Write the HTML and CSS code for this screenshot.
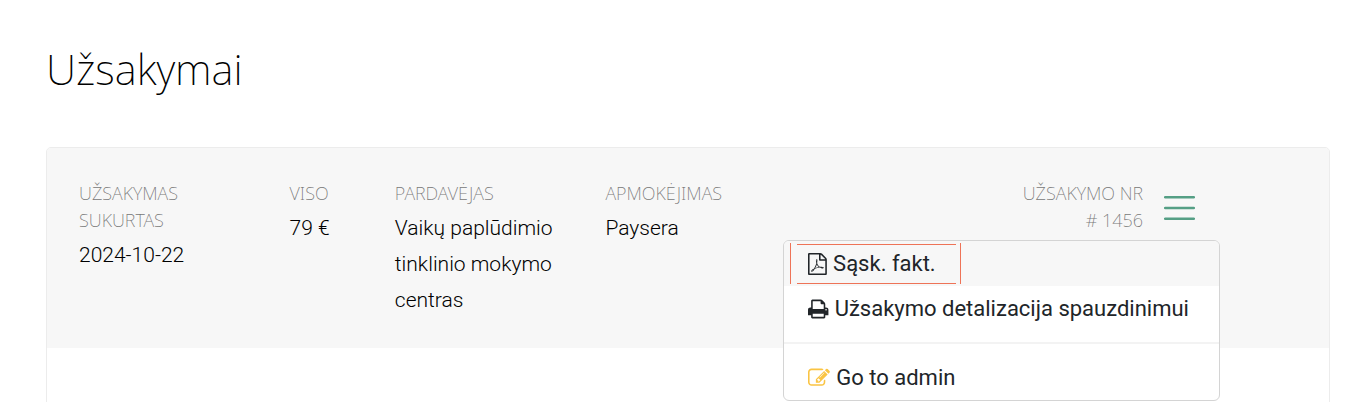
FILE: index.html
```html
<!DOCTYPE html>
<html lang="lt">
<head>
    <meta charset="UTF-8">
    <meta name="viewport" content="width=device-width, initial-scale=1.0">
    <title>Užsakymai</title>
    <link rel="stylesheet" href="styles.css">
</head>
<body>

<main class="page">
    <h1>Užsakymai</h1>

    <section class="order">
        <div class="order-header">
            <div class="order-col">
                <div class="label">Užsakymas sukurtas</div>
                <div class="value">2024-10-22</div>
            </div>
            <div class="order-col">
                <div class="label">Viso</div>
                <div class="value">79 €</div>
            </div>
            <div class="order-col">
                <div class="label">Pardavėjas</div>
                <div class="value">Vaikų paplūdimio tinklinio mokymo centras</div>
            </div>
            <div class="order-col">
                <div class="label">Apmokėjimas</div>
                <div class="value">Paysera</div>
            </div>
            <div class="order-actions">
                <div class="label">Užsakymo nr<br># 1456</div>
                <button class="menu-button" type="button" aria-label="Meniu" aria-expanded="true">
                    <svg width="31" height="26" viewBox="0 0 31 26" aria-hidden="true">
                        <path d="M1.2 2.2h28.6M1.2 13h28.6M1.2 23.8h28.6" fill="none" stroke="#559f85" stroke-width="2.5" stroke-linecap="round"/>
                    </svg>
                </button>

                <div class="dropdown">
                    <a class="dropdown-item active" href="#">
                        <svg class="icon" viewBox="128 0 1536 1792" aria-hidden="true"><path d="M1596 380q28 28 48 76t20 88v1152q0 40-28 68t-68 28h-1344q-40 0-68-28t-28-68v-1600q0-40 28-68t68-28h896q40 0 88 20t76 48zm-444-244v376h376q-10-29-22-41l-313-313q-12-12-41-22zm384 1528v-1024h-416q-40 0-68-28t-28-68v-416h-768v1536h1280zm-514-593q33 26 84 56 59-7 117-7 147 0 177 49 16 22 2 52 0 1-1 2l-2 2v1q-6 38-71 38-48 0-115-20t-130-53q-221 24-392 83-153 262-242 262-15 0-28-7l-24-12q-1-1-6-5-10-10-6-36 9-40 56-91.5t132-96.5q14-9 23 6 2 2 2 4 52-85 107-197 68-136 104-262-24-82-30.5-159.5t6.5-127.5q11-40 42-40h22q23 0 35 15 18 21 9 68-2 6-4 8 1 3 1 8v30q-2 123-14 192 55 164 146 238zm-576 411q52-24 137-158-51 40-87.5 84t-49.5 74zm398-920q-15 42-2 132 1-7 7-44 0-3 7-43 1-4 4-8-1-1-1-2t-1-2q-1-22-13-36 0 1-1 2v2zm-124 661q135-54 284-81-2-1-13-9.5t-16-13.5q-76-67-127-176-27 86-83 197-30 56-45 83zm646-16q-24-24-140-24 76 28 124 28 14 0 18-1 0-1-2-3z"/></svg>
                        <span>Sąsk. fakt.</span>
                    </a>
                    <a class="dropdown-item" href="#">
                        <svg class="icon" viewBox="64 0 1664 1792" aria-hidden="true"><path d="M448 1536h896v-256h-896v256zm0-640h896v-384h-160q-40 0-68-28t-28-68v-160h-640v640zm1152 64q0-26-19-45t-45-19-45 19-19 45 19 45 45 19 45-19 19-45zm128 0v416q0 13-9.500 22.500t-22.500 9.500h-224v160q0 40-28 68t-68 28h-960q-40 0-68-28t-28-68v-160h-224q-13 0-22.500-9.500t-9.500-22.500v-416q0-79 56.500-135.500t135.500-56.500h64v-544q0-40 28-68t68-28h672q40 0 88 20t76 48l152 152q28 28 48 76t20 88v256h64q79 0 135.500 56.500t56.500 135.500z"/></svg>
                        <span>Užsakymo detalizacija spauzdinimui</span>
                    </a>
                    <hr class="dropdown-divider">
                    <a class="dropdown-item" href="#">
                        <svg class="icon icon-edit" viewBox="0 0 1792 1792" aria-hidden="true"><path d="M888 1184l116-116-152-152-116 116v56h96v96h56zm440-720q-16-16-33 1l-350 350q-17 17-1 33t33-1l350-350q17-17 1-33zm80 594v190q0 119-84.500 203.500t-203.500 84.500h-832q-119 0-203.500-84.500t-84.500-203.500v-832q0-119 84.500-203.500t203.500-84.500h832q63 0 117 25 15 7 18 23 3 17-9 29l-49 49q-14 14-32 8-23-6-45-6h-832q-66 0-113 47t-47 113v832q0 66 47 113t113 47h832q66 0 113-47t47-113v-126q0-13 9-22l64-64q15-15 35-7t20 29zm-96-738l288 288-672 672h-288v-288zm444 132l-92 92-288-288 92-92q28-28 68-28t68 28l152 152q28 28 28 68t-28 68z"/></svg>
                        <span>Go to admin</span>
                    </a>
                </div>
            </div>
        </div>
        <div class="order-body"></div>
    </section>
</main>

</body>
</html>
```
FILE: styles.css
```css
* {
    box-sizing: border-box;
}
body {
    margin: 0;
    background-color: #fff;
    color: #000;
    font-family: Roboto, Arial, sans-serif;
    font-weight: 300;
    font-size: 21px;
}
.page {
    padding: 39px 36px 0 46px;
}
h1 {
    margin: 0 0 48px;
    font-family: "Noto Sans", sans-serif;
    font-weight: 200;
    font-size: 42px;
    line-height: 60px;
}
.order {
    border: 1px solid #ececec;
    border-radius: 5px;
}
.order-header {
    display: grid;
    grid-template-columns: 2fr 1fr 2fr 2fr 3.6fr;
    padding: 32px 134px 30px 32px;
    background-color: #f7f7f7;
    border-radius: 4px 4px 0 0;
}
.order-body {
    min-height: 100px;
}
.order-col {
    padding-right: 30px;
}
.label {
    font-family: "Noto Sans", sans-serif;
    font-weight: 200;
    font-size: 18px;
    line-height: 27px;
    color: #777;
    text-transform: uppercase;
}
.value {
    margin-top: 3px;
    line-height: 36px;
}
.order-actions {
    position: relative;
    display: flex;
    justify-content: flex-end;
    align-items: flex-start;
    gap: 21px;
    text-align: right;
}
.menu-button {
    display: block;
    padding: 0;
    margin-top: 15px;
    border: 0;
    background: none;
    cursor: pointer;
}
.menu-button svg {
    display: block;
}

/* Dropdown menu */
.dropdown {
    position: absolute;
    top: 60px;
    right: -25px;
    background-color: #fff;
    border: 1px solid #d4d4d4;
    border-radius: 6px;
    overflow: hidden;
    text-align: left;
}
.dropdown-item {
    position: relative;
    display: flex;
    align-items: center;
    gap: 6px;
    height: 45px;
    padding: 0 30px 0 24px;
    color: #212529;
    font-weight: 400;
    font-size: 22px;
    text-decoration: none;
    white-space: nowrap;
}
.dropdown-item.active {
    background-color: #f7f7f7;
}
.dropdown-item.active::before,
.dropdown-item.active::after {
    content: "";
    position: absolute;
    border: 0 solid #ee7357;
}
.dropdown-item.active::before {
    left: 6px;
    top: 2px;
    width: 169px;
    height: 41px;
    border-width: 0 1px;
}
.dropdown-item.active::after {
    left: 13px;
    top: 3px;
    width: 159px;
    height: 38px;
    border-width: 1px 0;
}
.dropdown-divider {
    height: 2px;
    margin: 11px 0;
    border: 0;
    background-color: #f3f3f3;
}
.icon {
    height: 22px;
    fill: currentColor;
}
.icon-edit {
    color: #fac443;
}
```
